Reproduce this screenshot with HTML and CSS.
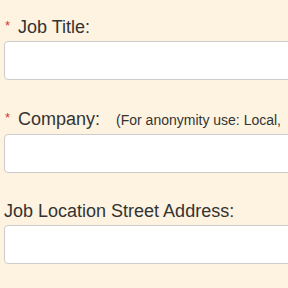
FILE: index.html
```html
<!DOCTYPE html>
<html lang="en">
<head>
    <meta charset="UTF-8">
    <meta name="viewport" content="width=device-width, initial-scale=1.0">
    <title>Post a Job</title>
    <link rel="stylesheet" href="styles.css">
</head>
<body>

<form id="jobForm" class="form-container">
    <div class="form-group">
        <label for="job_title"><span class="req">*</span>Job Title:</label>
        <input type="text" id="job_title" name="job_title" class="form-control" required />
    </div>

    <div class="form-group">
        <label for="company"><span class="req">*</span>Company: <span class="hint">(For anonymity use: Local,</span></label>
        <input type="text" id="company" name="company" class="form-control" required />
    </div>

    <div class="form-group">
        <label for="street">Job Location Street Address:</label>
        <input type="text" id="street" name="street" class="form-control" />
    </div>
</form>

</body>
</html>
```

FILE: styles.css
```css
html, body {
    margin: 0;
    background-color: #fdf3e0;
}

body {
    font-family: "Liberation Sans", Arial, sans-serif;
    color: #333;
    overflow: hidden;
}

.form-container {
    width: 320px;
    padding: 16px 0 0 4px;
}

.form-group {
    margin-bottom: 28px;
}

.form-group label {
    display: block;
    font-size: 18px;
    line-height: 20px;
    margin-bottom: 4px;
    white-space: nowrap;
}

.req {
    display: inline-block;
    width: 13px;
    padding-left: 1px;
    color: #d9362b;
    font-size: 13px;
    vertical-align: 3px;
}

.hint {
    font-size: 14px;
    margin-left: 11px;
}

.form-group input {
    display: block;
    width: 100%;
    height: 39px;
    box-sizing: border-box;
    border: 1px solid #ccc;
    border-radius: 4px;
    background: #fff;
}
```
